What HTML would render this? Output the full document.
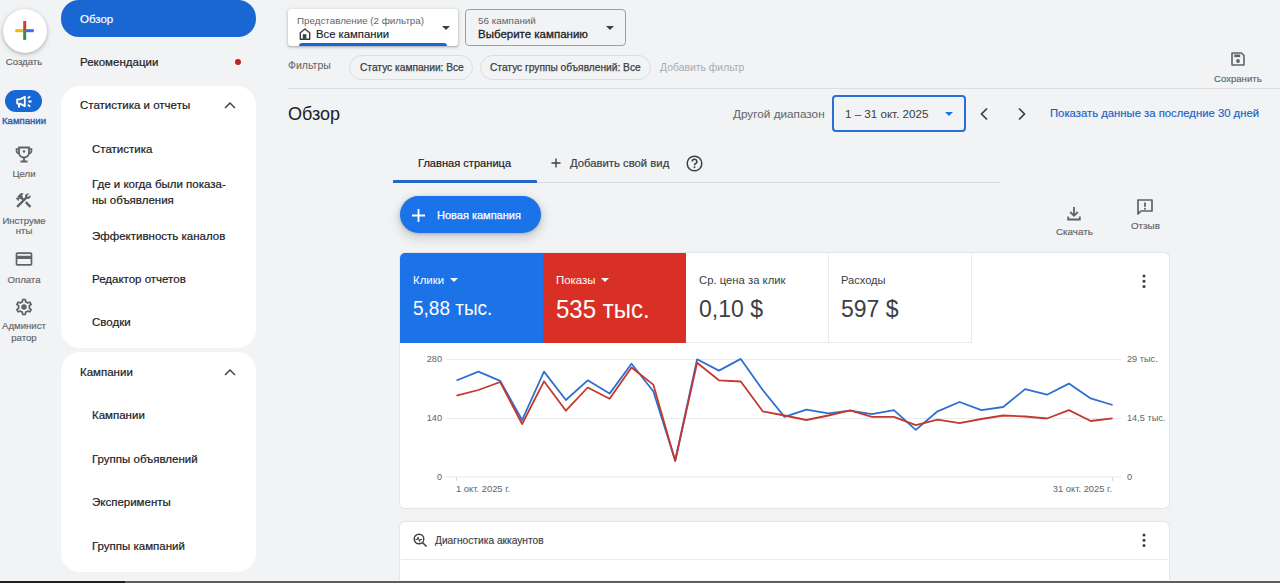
<!DOCTYPE html>
<html><head><meta charset="utf-8">
<style>
*{box-sizing:border-box;margin:0;padding:0}
html,body{width:1280px;height:583px;overflow:hidden;background:#f1f3f4;font-family:"Liberation Sans",sans-serif;color:#202124}
.abs{position:absolute;white-space:nowrap}
.t{position:absolute;white-space:nowrap;line-height:1}
/* left rail */
.rail-lbl{position:absolute;left:0;width:48px;text-align:center;font-size:9.6px;color:#5f6368;line-height:11px;-webkit-text-stroke:0.15px #5f6368}
.nav-item{position:absolute;font-size:11.5px;color:#202124;line-height:1;-webkit-text-stroke:0.2px #202124}
.card{position:absolute;background:#fff}
</style></head>
<body>
<!-- Left rail -->
<div class="abs" style="left:3px;top:9px;width:44px;height:44px;border-radius:50%;background:#fff;box-shadow:0 1px 3px rgba(60,64,67,.3),0 2px 6px rgba(60,64,67,.15)"></div>
<svg class="abs" style="left:0;top:0" width="48" height="48" viewBox="0 0 48 48"><rect x="15.3" y="29.2" width="9.5" height="3" fill="#f2b511"/><rect x="23.2" y="30.5" width="3" height="9.4" fill="#2f9447"/><rect x="23.2" y="21" width="3" height="9.5" fill="#d63b2e"/><rect x="24.6" y="29.2" width="9.2" height="3" fill="#3c70e0"/></svg>
<div class="rail-lbl" style="top:56px">Создать</div>

<div class="abs" style="left:5px;top:90px;width:37px;height:22px;border-radius:11px;background:#1967d2"></div>
<svg class="abs" style="left:0;top:88px" width="48" height="24" viewBox="0 88 48 24"><path d="M17.2 99.4h2.8l4.8-2.6v9.4l-4.8-2.6h-2.8z" fill="none" stroke="#fff" stroke-width="1.9" stroke-linejoin="round"/><path d="M19 104v3.6" stroke="#fff" stroke-width="2"/><path d="M27.8 98.3l2.4-1.9M28.3 101.5h3.3M27.8 104.7l2.4 1.9" stroke="#fff" stroke-width="1.8"/></svg>
<div class="rail-lbl" style="top:115px;color:#2a5cb0;-webkit-text-stroke:0.35px #2a5cb0">Кампании</div>

<svg class="abs" style="left:15px;top:146px" width="18" height="17" viewBox="0 0 18 17"><path d="M4 1.5h10v5a5 5 0 0 1-10 0z" fill="none" stroke="#5f6368" stroke-width="1.8"/><path d="M4 3H1.5v1.5A3 3 0 0 0 4.5 7.5M14 3h2.5v1.5a3 3 0 0 1-3 3" fill="none" stroke="#5f6368" stroke-width="1.6"/><path d="M9 11.5v3M5.5 15.5h7" stroke="#5f6368" stroke-width="1.8"/><circle cx="9" cy="5.5" r="1.3" fill="#5f6368"/></svg>
<div class="rail-lbl" style="top:168px">Цели</div>

<svg class="abs" style="left:14px;top:191px" width="19" height="19" viewBox="0 0 24 24"><path fill="#5f6368" d="M13.783 15.172l2.121-2.121 5.996 5.996-2.121 2.121zM17.5 10c1.93 0 3.5-1.57 3.5-3.5 0-.58-.16-1.12-.41-1.6l-2.7 2.7-1.49-1.49 2.7-2.7c-.48-.25-1.020-.41-1.6-.41C15.57 3 14 4.57 14 6.5c0 .41.08.8.21 1.16l-1.85 1.85-1.78-1.78.71-.71-1.41-1.41L12 3.49c-1.17-1.17-3.07-1.17-4.24 0L4.22 7.03l1.41 1.41H2.81l-.71.71 3.54 3.54.71-.71V9.15l1.41 1.41.71-.71 1.78 1.78-7.41 7.41 2.12 2.12L16.34 9.79c.36.13.75.21 1.16.21z"/></svg>
<div class="rail-lbl" style="top:215px">Инструме</div>
<div class="rail-lbl" style="top:225px">нты</div>

<svg class="abs" style="left:14px;top:249px" width="20" height="20" viewBox="0 0 24 24"><path fill="#5f6368" d="M20 4H4c-1.110 0-1.99.89-1.99 2L2 18c0 1.11.89 2 2 2h16c1.11 0 2-.89 2-2V6c0-1.11-.89-2-2-2zm0 14H4v-6h16v6zm0-10H4V6h16v2z"/></svg>
<div class="rail-lbl" style="top:274px">Оплата</div>

<svg class="abs" style="left:14px;top:297px" width="20" height="20" viewBox="0 0 24 24"><path fill="#5f6368" d="M19.43 12.98c.04-.32.07-.64.07-.98 0-.34-.03-.66-.07-.98l2.11-1.65c.19-.15.24-.42.12-.64l-2-3.46c-.09-.16-.26-.25-.44-.25-.06 0-.12.01-.17.03l-2.49 1c-.52-.4-1.08-.73-1.69-.98l-.38-2.65C14.46 2.18 14.25 2 14 2h-4c-.25 0-.46.18-.49.42l-.38 2.65c-.61.25-1.17.59-1.69.98l-2.49-1c-.06-.02-.12-.03-.18-.03-.17 0-.34.09-.43.25l-2 3.46c-.13.22-.07.49.12.64l2.11 1.65c-.04.32-.07.65-.07.98 0 .33.03.66.07.98l-2.11 1.65c-.19.15-.24.42-.12.64l2 3.46c.09.16.26.25.44.25.06 0 .12-.01.17-.03l2.49-1c.52.4 1.08.73 1.69.98l.38 2.65c.03.24.24.42.49.42h4c.25 0 .46-.18.49-.42l.38-2.65c.61-.25 1.17-.59 1.69-.98l2.49 1c.06.02.12.03.18.03.17 0 .34-.09.43-.25l2-3.46c.12-.22.07-.49-.12-.64l-2.11-1.65zm-1.98-1.71c.04.31.05.52.05.73 0 .21-.02.43-.05.73l-.14 1.13.89.7 1.08.84-.7 1.21-1.27-.51-1.04-.42-.9.68c-.43.32-.84.56-1.25.73l-1.06.43-.16 1.13-.2 1.35h-1.4l-.19-1.35-.16-1.13-1.06-.43c-.43-.18-.83-.41-1.23-.71l-.91-.7-1.06.43-1.27.51-.7-1.21 1.08-.84.89-.7-.14-1.13c-.03-.31-.05-.54-.05-.74s.02-.43.05-.73l.14-1.13-.89-.7-1.08-.84.7-1.21 1.27.51 1.04.42.9-.68c.43-.32.84-.56 1.25-.73l1.06-.43.16-1.13.2-1.35h1.39l.19 1.35.16 1.13 1.06.43c.43.18.83.41 1.23.71l.91.7 1.06-.43 1.27-.51.7 1.21-1.07.85-.89.7.14 1.13z"/><circle cx="12" cy="12" r="3.2" fill="#5f6368"/></svg>
<div class="rail-lbl" style="top:320px">Админист</div>
<div class="rail-lbl" style="top:332px">ратор</div>

<!-- Second nav column -->
<div class="abs" style="left:61px;top:0;width:195px;height:37px;border-radius:18px;background:#1967d2"></div>
<div class="nav-item" style="left:80px;top:14px;color:#fff;-webkit-text-stroke:0.2px #fff">Обзор</div>
<div class="nav-item" style="left:80px;top:57px">Рекомендации</div>
<div class="abs" style="left:235px;top:59px;width:6px;height:6px;border-radius:50%;background:#c5221f"></div>

<div class="card" style="left:61px;top:86px;width:195px;height:262px;border-radius:19px"></div>
<div class="nav-item" style="left:80px;top:100px">Статистика и отчеты</div>
<svg class="abs" style="left:223px;top:100px" width="14" height="10" viewBox="0 0 14 10"><path d="M2 8l5-5 5 5" fill="none" stroke="#3c4043" stroke-width="1.45"/></svg>
<div class="nav-item" style="left:92px;top:144px">Статистика</div>
<div class="nav-item" style="left:92px;top:179px">Где и когда были показа-</div>
<div class="nav-item" style="left:92px;top:195px">ны объявления</div>
<div class="nav-item" style="left:92px;top:231px">Эффективность каналов</div>
<div class="nav-item" style="left:92px;top:274px">Редактор отчетов</div>
<div class="nav-item" style="left:92px;top:317px">Сводки</div>

<div class="card" style="left:61px;top:352px;width:195px;height:220px;border-radius:19px"></div>
<div class="nav-item" style="left:80px;top:367px">Кампании</div>
<svg class="abs" style="left:223px;top:367px" width="14" height="10" viewBox="0 0 14 10"><path d="M2 8l5-5 5 5" fill="none" stroke="#3c4043" stroke-width="1.45"/></svg>
<div class="nav-item" style="left:92px;top:410px">Кампании</div>
<div class="nav-item" style="left:92px;top:454px">Группы объявлений</div>
<div class="nav-item" style="left:92px;top:497px">Эксперименты</div>
<div class="nav-item" style="left:92px;top:541px">Группы кампаний</div>


<!-- Top controls -->
<div class="abs" style="left:288px;top:9px;width:170px;height:37px;background:#fff;border-radius:3px;box-shadow:0 1px 2px rgba(60,64,67,.3),0 1px 3px 1px rgba(60,64,67,.12);overflow:hidden">
  <div class="t" style="left:9px;top:7px;font-size:9.8px;color:#5f6368">Представление (2 фильтра)</div>
  <svg class="abs" style="left:11px;top:19px" width="12" height="12" viewBox="0 0 12 12"><path d="M1.3 11.2V4.8L6 1 10.7 4.8v6.4z" fill="none" stroke="#3c4043" stroke-width="1.4" stroke-linejoin="round"/><rect x="3.8" y="6.2" width="3.6" height="4.6" fill="#3c4043"/></svg>
  <div class="t" style="left:28px;top:20px;font-size:11.3px;color:#202124;-webkit-text-stroke:0.15px #202124">Все кампании</div>
  <svg class="abs" style="left:154px;top:17px" width="8" height="5" viewBox="0 0 8 5"><path d="M0 0h8L4 4z" fill="#3c4043"/></svg>
  <div class="abs" style="left:11px;top:34px;width:148px;height:5px;border-radius:3px 3px 0 0;background:#1967d2"></div>
</div>
<div class="abs" style="left:465px;top:9px;width:161px;height:37px;border:1px solid #9aa0a6;border-radius:4px;background:#f1f3f4">
  <div class="t" style="left:12px;top:6px;font-size:9.9px;color:#5f6368">56 кампаний</div>
  <div class="t" style="left:12px;top:19px;font-size:11.5px;color:#202124;-webkit-text-stroke:0.3px #202124">Выберите кампанию</div>
  <svg class="abs" style="left:140px;top:16px" width="8" height="5" viewBox="0 0 8 5"><path d="M0 0h8L4 4z" fill="#3c4043"/></svg>
</div>

<div class="t" style="left:288px;top:60px;font-size:10.5px;color:#5f6368">Фильтры</div>
<div class="abs" style="left:349px;top:55px;width:124px;height:25px;border:1px solid #dadce0;border-radius:13px"></div>
<div class="t" style="left:360px;top:63px;font-size:10.2px;color:#3c4043;-webkit-text-stroke:0.25px #3c4043">Статус кампании: Все</div>
<div class="abs" style="left:480px;top:55px;width:171px;height:25px;border:1px solid #dadce0;border-radius:13px"></div>
<div class="t" style="left:490px;top:63px;font-size:10.2px;color:#3c4043;-webkit-text-stroke:0.25px #3c4043">Статус группы объявлений: Все</div>
<div class="t" style="left:660px;top:63px;font-size:10.4px;color:#a8abaf">Добавить фильтр</div>

<svg class="abs" style="left:1230px;top:51px" width="16" height="16" viewBox="0 0 16 16"><path d="M2 2h9.5L14 4.5V14H2z" fill="none" stroke="#5f6368" stroke-width="1.6" stroke-linejoin="round"/><rect x="4.2" y="3.5" width="6" height="2.6" fill="#5f6368"/><circle cx="8" cy="10" r="1.9" fill="#5f6368"/></svg>
<div class="t" style="left:1214px;top:74px;font-size:9.6px;color:#5f6368;-webkit-text-stroke:0.15px #5f6368">Сохранить</div>

<div class="abs" style="left:288px;top:88px;width:992px;height:1px;background:#dadce0"></div>

<div class="t" style="left:288px;top:105px;font-size:18px;color:#202124">Обзор</div>
<div class="t" style="left:733px;top:108px;font-size:11.75px;color:#5f6368">Другой диапазон</div>
<div class="abs" style="left:832px;top:95px;width:134px;height:37px;border:2px solid #2a6fd4;border-radius:4px"></div>
<div class="t" style="left:845px;top:108px;font-size:11.6px;color:#3c4043">1 – 31 окт. 2025</div>
<svg class="abs" style="left:945px;top:112px" width="8" height="5" viewBox="0 0 8 5"><path d="M0 0h8L4 4z" fill="#1a73e8"/></svg>
<svg class="abs" style="left:978px;top:107px" width="12" height="14" viewBox="0 0 12 14"><path d="M9 1.5L3.5 7 9 12.5" fill="none" stroke="#3c4043" stroke-width="1.7"/></svg>
<svg class="abs" style="left:1016px;top:107px" width="12" height="14" viewBox="0 0 12 14"><path d="M3 1.5L8.5 7 3 12.5" fill="none" stroke="#3c4043" stroke-width="1.7"/></svg>
<div class="t" style="left:1050px;top:108px;font-size:11.3px;color:#1a5fc8;-webkit-text-stroke:0.15px #1a5fc8">Показать данные за последние 30 дней</div>

<!-- tabs -->
<div class="abs" style="left:393px;top:182px;width:608px;height:1px;background:#dadce0"></div>
<div class="abs" style="left:393px;top:180px;width:144px;height:2.5px;background:#2366cc;border-radius:1px 1px 0 0"></div>
<div class="t" style="left:418px;top:158px;font-size:11.1px;color:#202124;-webkit-text-stroke:0.2px #202124">Главная страница</div>
<svg class="abs" style="left:551px;top:158px" width="10" height="10" viewBox="0 0 10 10"><path d="M5 0.5v9M0.5 5h9" stroke="#3c4043" stroke-width="1.4"/></svg>
<div class="t" style="left:570px;top:158px;font-size:11.3px;color:#3c4043;-webkit-text-stroke:0.2px #3c4043">Добавить свой вид</div>
<svg class="abs" style="left:686px;top:155px" width="17" height="17" viewBox="0 0 17 17"><circle cx="8.5" cy="8.5" r="7.3" fill="none" stroke="#3c4043" stroke-width="1.5"/><path d="M6.2 6.6a2.3 2.3 0 1 1 3.2 2.1c-.7.3-.9.8-.9 1.5" fill="none" stroke="#3c4043" stroke-width="1.5"/><circle cx="8.5" cy="12.3" r=".95" fill="#3c4043"/></svg>

<div class="abs" style="left:400px;top:196px;width:141px;height:37px;border-radius:19px;background:#1a73e8;box-shadow:0 1px 3px rgba(60,64,67,.3),0 4px 8px 3px rgba(60,64,67,.15)"></div>
<svg class="abs" style="left:412px;top:209px" width="13" height="13" viewBox="0 0 13 13"><path d="M6.5 0v13M0 6.5h13" stroke="#fff" stroke-width="1.8"/></svg>
<div class="t" style="left:437px;top:210px;font-size:11px;color:#fff;-webkit-text-stroke:0.25px #fff">Новая кампания</div>

<svg class="abs" style="left:1067px;top:206px" width="14" height="15" viewBox="0 0 14 15"><path d="M7 1v8.5M3.2 6l3.8 3.8L10.8 6" fill="none" stroke="#5f6368" stroke-width="1.8"/><path d="M1.2 10.5v3h11.6v-3" fill="none" stroke="#5f6368" stroke-width="1.8"/></svg>
<div class="t" style="left:1056px;top:227px;font-size:9.8px;color:#5f6368;-webkit-text-stroke:0.15px #5f6368">Скачать</div>
<svg class="abs" style="left:1137px;top:199px" width="16" height="16" viewBox="0 0 16 16"><path d="M1 1h14v11H4l-3 3z" fill="none" stroke="#5f6368" stroke-width="1.7" stroke-linejoin="round"/><path d="M8 3.5v4.3" stroke="#5f6368" stroke-width="1.8"/><circle cx="8" cy="9.8" r="1" fill="#5f6368"/></svg>
<div class="t" style="left:1131px;top:221px;font-size:9.8px;color:#5f6368;-webkit-text-stroke:0.15px #5f6368">Отзыв</div>

<!-- chart card -->
<div class="abs" style="left:400px;top:253px;width:769px;height:255px;background:#fff;border-radius:5px;box-shadow:0 0 0 1px #e3e5e8"></div>
<div class="abs" style="left:400px;top:253px;width:143px;height:90px;background:#1b73e7;border-radius:5px 0 0 0"></div>
<div class="abs" style="left:543px;top:253px;width:143px;height:90px;background:#d93025"></div>
<div class="abs" style="left:686px;top:253px;width:286px;height:90px;border-right:1px solid #e8eaed;border-bottom:1px solid #e8eaed"></div>
<div class="abs" style="left:828px;top:253px;width:1px;height:90px;background:#e8eaed"></div>

<div class="t" style="left:413px;top:275px;font-size:11.4px;color:#fff">Клики</div>
<svg class="abs" style="left:450px;top:278px" width="8" height="5" viewBox="0 0 8 5"><path d="M0 0h8L4 4z" fill="#fff"/></svg>
<div class="t" style="left:413px;top:298px;font-size:20px;color:#fff;transform:scaleX(.95);transform-origin:0 0">5,88 тыс.</div>
<div class="t" style="left:556px;top:275px;font-size:11.4px;color:#fff">Показы</div>
<svg class="abs" style="left:601px;top:278px" width="8" height="5" viewBox="0 0 8 5"><path d="M0 0h8L4 4z" fill="#fff"/></svg>
<div class="t" style="left:556px;top:297px;font-size:25px;color:#fff;transform:scaleX(.96);transform-origin:0 0">535 тыс.</div>
<div class="t" style="left:699px;top:275px;font-size:11.3px;color:#3c4043">Ср. цена за клик</div>
<div class="t" style="left:699px;top:298px;font-size:23px;color:#3c4043">0,10 $</div>
<div class="t" style="left:841px;top:275px;font-size:11.1px;color:#3c4043">Расходы</div>
<div class="t" style="left:841px;top:298px;font-size:23px;color:#3c4043">597 $</div>
<svg class="abs" style="left:1141px;top:274px" width="6" height="15" viewBox="0 0 6 15"><circle cx="3" cy="2" r="1.5" fill="#3c4043"/><circle cx="3" cy="7.2" r="1.5" fill="#3c4043"/><circle cx="3" cy="12.4" r="1.5" fill="#3c4043"/></svg>

<svg class="abs" style="left:0;top:0" width="1280" height="583" viewBox="0 0 1280 583">
<path d="M446 359.5H1121M446 418.5H1121M446 477H1121" stroke="#e8eaed" stroke-width="1.2"/>
<path d="M456.5 477v4M1112.6 477v4" stroke="#dadce0" stroke-width="1"/>
<path d="M456.5 380.5 L478.4 371.6 L500.2 380.9 L522.1 420.0 L544.0 371.6 L565.9 400.0 L587.7 380.3 L609.6 393.6 L631.5 363.8 L653.3 391.2 L675.2 460.5 L697.1 359.3 L718.9 370.6 L740.8 358.9 L762.7 390.0 L784.5 416.9 L806.4 409.7 L828.3 413.4 L850.2 410.7 L872.0 414.2 L893.9 410.1 L915.8 429.9 L937.6 411.3 L959.5 402.0 L981.4 410.1 L1003.2 407.0 L1025.1 389.1 L1047.0 394.7 L1068.9 383.6 L1090.7 398.4 L1112.6 405.0" fill="none" stroke="#2f6fd0" stroke-width="1.8" stroke-linejoin="round"/>
<path d="M456.5 395.7 L478.4 390.0 L500.2 382.0 L522.1 424.0 L544.0 381.3 L565.9 410.7 L587.7 387.5 L609.6 398.8 L631.5 367.5 L653.3 384.6 L675.2 461.0 L697.1 362.8 L718.9 380.3 L740.8 381.5 L762.7 411.3 L784.5 415.5 L806.4 420.0 L828.3 415.5 L850.2 410.3 L872.0 416.9 L893.9 416.9 L915.8 425.1 L937.6 419.6 L959.5 423.1 L981.4 419.0 L1003.2 415.5 L1025.1 416.5 L1047.0 418.5 L1068.9 410.1 L1090.7 421.0 L1112.6 418.3" fill="none" stroke="#c2392f" stroke-width="1.8" stroke-linejoin="round"/>
</svg>
<div class="t" style="left:400px;top:355px;width:42px;text-align:right;font-size:9.2px;color:#5f6368">280</div>
<div class="t" style="left:400px;top:414px;width:42px;text-align:right;font-size:9.2px;color:#5f6368">140</div>
<div class="t" style="left:400px;top:473px;width:42px;text-align:right;font-size:9.2px;color:#5f6368">0</div>
<div class="t" style="left:1127px;top:355px;font-size:9.2px;color:#5f6368">29 тыс.</div>
<div class="t" style="left:1127px;top:414px;font-size:9.2px;color:#5f6368">14,5 тыс.</div>
<div class="t" style="left:1127px;top:473px;font-size:9.2px;color:#5f6368">0</div>
<div class="t" style="left:456px;top:484px;font-size:9.4px;color:#5f6368">1 окт. 2025 г.</div>
<div class="t" style="left:1000px;top:484px;width:112px;text-align:right;font-size:9.4px;color:#5f6368">31 окт. 2025 г.</div>

<!-- diagnostics card -->
<div class="abs" style="left:400px;top:522px;width:769px;height:80px;background:#fff;border-radius:5px;box-shadow:0 0 0 1px #e3e5e8"></div>
<div class="abs" style="left:401px;top:559px;width:767px;height:1px;background:#e8eaed"></div>
<svg class="abs" style="left:413px;top:533px" width="15" height="15" viewBox="0 0 15 15"><circle cx="6" cy="6" r="4.8" fill="none" stroke="#3c4043" stroke-width="1.4"/><path d="M9.5 9.5l4 4" stroke="#3c4043" stroke-width="1.6"/><path d="M2.5 6.5h1.5l1-2 1.5 3.5 1-1.5h1.5" fill="none" stroke="#3c4043" stroke-width="1.1"/></svg>
<div class="t" style="left:435px;top:536px;font-size:10.2px;color:#3c4043;-webkit-text-stroke:0.15px #3c4043">Диагностика аккаунтов</div>
<svg class="abs" style="left:1141px;top:533px" width="6" height="15" viewBox="0 0 6 15"><circle cx="3" cy="2" r="1.5" fill="#3c4043"/><circle cx="3" cy="7.2" r="1.5" fill="#3c4043"/><circle cx="3" cy="12.4" r="1.5" fill="#3c4043"/></svg>

<!-- bottom dark bar -->
<div class="abs" style="left:0;top:580px;width:1280px;height:1px;background:#f6f6f6"></div><div class="abs" style="left:0;top:581px;width:1280px;height:2px;background:#5e5e5e"></div><div class="abs" style="left:0;top:581px;width:125px;height:2px;background:#1e1e1e"></div>
</body></html>
